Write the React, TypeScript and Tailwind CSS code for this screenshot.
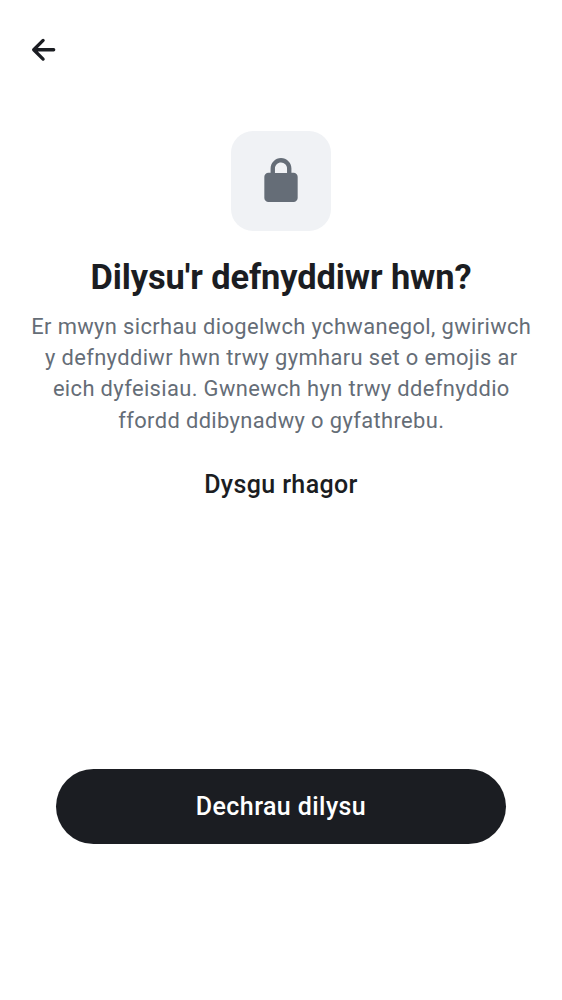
export default function App() {
  return (
    <main className="flex h-[1000px] w-full flex-col bg-white font-['Roboto',sans-serif] text-[#1b1d22]">
      <header className="flex h-[100px] shrink-0 items-center pl-[25px]">
        <button aria-label="Yn ôl" className="size-[37.5px]">
          <svg viewBox="0 0 37.5 37.5" className="size-full" fill="none" stroke="currentColor" strokeWidth="3.3" strokeLinecap="round" strokeLinejoin="round">
            <path d="M28.7 18.75H8.8M18.1 9.4L8.7 18.75L18.1 28.1" />
          </svg>
        </button>
      </header>
      <section className="flex flex-col items-center pt-[31px]">
        <div className="flex size-[100px] items-center justify-center rounded-[22px] bg-[#f0f2f5] text-[#656d77]">
          <svg viewBox="0 0 24 24" className="size-[50px]" fill="currentColor">
            <path d="M6 22.1a1.93 1.93 0 0 1-1.412-.587A1.926 1.926 0 0 1 4 20.1V10c0-.55.196-1.02.588-1.412A1.926 1.926 0 0 1 6 8h1V6c0-1.383.487-2.563 1.463-3.537C9.438 1.487 10.617 1 12 1s2.563.488 3.537 1.463C16.512 3.438 17 4.617 17 6v2h1c.55 0 1.02.196 1.412.588.392.391.588.862.588 1.412v10.1c0 .55-.196 1.02-.588 1.413A1.926 1.926 0 0 1 18 22.1H6zM9.1 8.1h5.8V6c0-.8-.282-1.48-.845-2.045A2.8 2.8 0 0 0 12 3.1c-.8 0-1.49.285-2.055.855C9.382 4.52 9.1 5.2 9.1 6v2.1z" />
          </svg>
        </div>
        <h1 className="mt-[25px] text-[34.4px] leading-[43px] font-bold tracking-[-0.1px] whitespace-nowrap">Dilysu'r defnyddiwr hwn?</h1>
        <p className="mt-[12px] pl-[0.6px] text-center text-[21.9px] leading-[31.2px] tracking-[0.37px] whitespace-nowrap text-[#656d77]">
          Er mwyn sicrhau diogelwch ychwanegol, gwiriwch<br />
          y defnyddiwr hwn trwy gymharu set o emojis ar<br />
          eich dyfeisiau. Gwnewch hyn trwy ddefnyddio<br />
          ffordd ddibynadwy o gyfathrebu.
        </p>
        <button className="mt-[29px] h-[40px] text-[25px] leading-[40px] font-medium tracking-[0.38px]">Dysgu rhagor</button>
      </section>
      <button className="mx-[56px] mt-auto mb-[156px] h-[75px] shrink-0 rounded-full bg-[#1b1d22] text-[25px] font-medium tracking-[0.42px] text-white">Dechrau dilysu</button>
    </main>
  );
}
